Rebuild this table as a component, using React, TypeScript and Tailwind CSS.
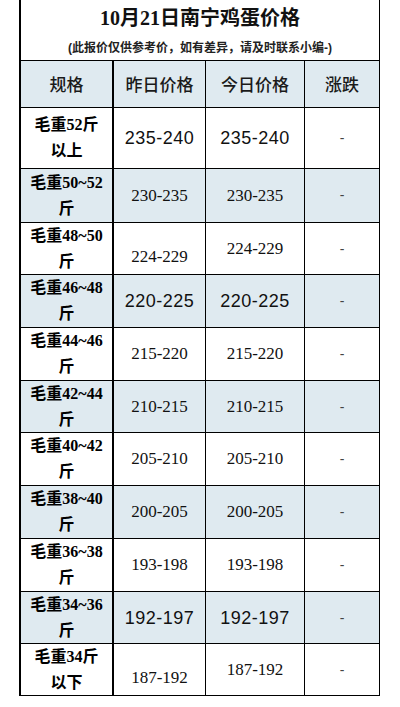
const rows = [
  { a: "毛重52斤", b: "以上", y: "235-240", t: "235-240", sans: true, blue: false, h: "h-[61px]", yOff: false },
  { a: "毛重50~52", b: "斤", y: "230-235", t: "230-235", sans: false, blue: true, h: "h-[54px]", yOff: false },
  { a: "毛重48~50", b: "斤", y: "224-229", t: "224-229", sans: false, blue: false, h: "h-[52px]", yOff: true },
  { a: "毛重46~48", b: "斤", y: "220-225", t: "220-225", sans: true, blue: true, h: "h-[53px]", yOff: false },
  { a: "毛重44~46", b: "斤", y: "215-220", t: "215-220", sans: false, blue: false, h: "h-[53px]", yOff: false },
  { a: "毛重42~44", b: "斤", y: "210-215", t: "210-215", sans: false, blue: true, h: "h-[52px]", yOff: false },
  { a: "毛重40~42", b: "斤", y: "205-210", t: "205-210", sans: false, blue: false, h: "h-[53px]", yOff: false },
  { a: "毛重38~40", b: "斤", y: "200-205", t: "200-205", sans: false, blue: true, h: "h-[53px]", yOff: false },
  { a: "毛重36~38", b: "斤", y: "193-198", t: "193-198", sans: false, blue: false, h: "h-[53px]", yOff: false },
  { a: "毛重34~36", b: "斤", y: "192-197", t: "192-197", sans: true, blue: true, h: "h-[52px]", yOff: false },
  { a: "毛重34斤", b: "以下", y: "187-192", t: "187-192", sans: false, blue: false, h: "h-[53px]", yOff: true },
];

const serif = "font-['Liberation_Serif','Noto_Sans_CJK_SC',serif]";
const sans = "font-['Liberation_Sans','Noto_Sans_CJK_SC',sans-serif]";

export default function App() {
  return (
    <div className="w-[400px] h-[707px] bg-white text-[#111]">
      <div className="ml-[19px] w-[361px]">
        {/* title */}
        <div className="h-[60px] border-l-2 border-r border-black flex flex-col items-center pt-[5px]">
          <div className={`${serif} text-[20px] font-bold leading-[26px]`}>10月21日南宁鸡蛋价格</div>
          <div className={`${sans} text-[12px] font-bold leading-[16px] mt-[9px] text-[#222]`}>
            (此报价仅供参考价，如有差异，请及时联系小编-)
          </div>
        </div>

        {/* header */}
        <div className="h-[47px] grid grid-cols-[95px_92px_99px_75px] border-t border-black bg-[#dfeaf0] font-['Noto_Sans_CJK_SC',sans-serif] text-[17px] font-medium text-[#1a1a1a]">
          <div className="border-l-2 border-r-2 border-black flex items-center justify-center">规格</div>
          <div className="border-r border-black flex items-center justify-center">昨日价格</div>
          <div className="border-r border-black flex items-center justify-center">今日价格</div>
          <div className="border-r border-black flex items-center justify-center">涨跌</div>
        </div>

        {rows.map((r, i) => (
          <div
            key={i}
            className={`${r.h} grid grid-cols-[95px_92px_99px_75px] border-t border-black ${r.blue ? "bg-[#dfeaf0]" : "bg-white"} ${i === rows.length - 1 ? "border-b" : ""}`}
          >
            <div className={`border-l-2 border-r-2 border-black flex flex-col items-center justify-center ${serif} text-[16px] font-bold leading-[26px] text-black`}>
              <span>{r.a}</span>
              <span>{r.b}</span>
            </div>
            <div
              className={`border-r border-black flex items-center justify-center ${r.sans ? `${sans} text-[18px] tracking-[0.5px]` : `${serif} text-[17px]`} ${r.yOff ? "pt-[16px]" : ""}`}
            >
              {r.y}
            </div>
            <div
              className={`border-r border-black flex items-center justify-center ${r.sans ? `${sans} text-[18px] tracking-[0.5px]` : `${serif} text-[17px]`}`}
            >
              {r.t}
            </div>
            <div className={`border-r border-black flex items-center justify-center ${sans} text-[14px] text-[#444]`}>-</div>
          </div>
        ))}
      </div>
    </div>
  );
}
